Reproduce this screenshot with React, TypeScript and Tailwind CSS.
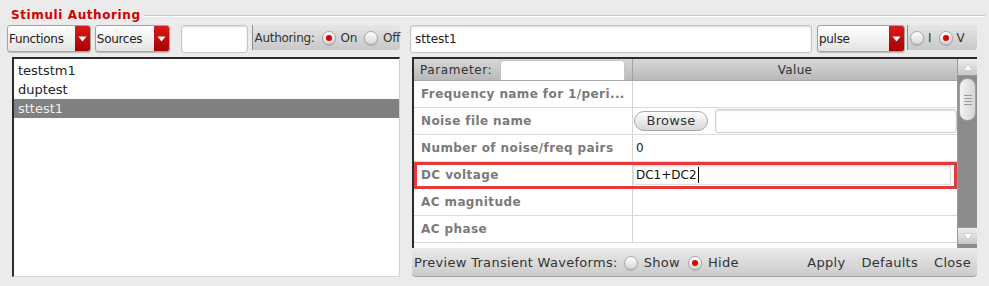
import React from "react";

const font = { fontFamily: '"DejaVu Sans", "Liberation Sans", sans-serif' };

function Arrow({ color = "white" }: { color?: string }) {
    return (
        <svg width="9" height="6" viewBox="0 0 9 6">
            <path d="M0.5 0.5 L8.5 0.5 L4.5 5.5 Z" fill={color} />
        </svg>
    );
}

function Dropdown({ label, width }: { label: string; width: string }) {
    return (
        <div className={`${width} h-[27px] flex rounded-[3px] border border-[#a4a4a4] bg-gradient-to-b from-white to-[#e4e4e4] overflow-hidden shadow-[0_1px_1px_rgba(0,0,0,0.2)]`}>
            <div className="flex-1 flex items-center pl-[1px] text-[12px] text-[#222] tracking-[-0.3px]">{label}</div>
            <div className="w-[15px] flex items-center justify-center bg-gradient-to-b from-[#d81a1a] to-[#a80000]">
                <Arrow />
            </div>
        </div>
    );
}

function Radio({ checked }: { checked?: boolean }) {
    return (
        <div className="w-[14px] h-[14px] rounded-full border border-[#a8a8a8] bg-gradient-to-b from-white to-[#d8d8d8] flex items-center justify-center shadow-[0_1px_1px_rgba(0,0,0,0.15)]">
            {checked && <div className="w-[6px] h-[6px] rounded-full bg-[#e00000]" />}
        </div>
    );
}

function ParamRow({ name, children, highlight }: { name: string; children?: React.ReactNode; highlight?: boolean }) {
    return (
        <div className={`flex h-[27px] bg-white border-b border-[#dadada] ${highlight ? "outline-[3px] outline outline-[#e63a3a] -outline-offset-[3px]" : ""}`}>
            <div className="w-[219px] flex items-center pl-[7px] text-[12px] font-bold text-[#7a7a7a] tracking-[0.4px] border-r border-[#d4d4d4] whitespace-nowrap">
                {name}
            </div>
            <div className="flex-1 flex items-center">{children}</div>
        </div>
    );
}

export default function App() {
    return (
        <div className="w-[989px] h-[286px] bg-[#ebebeb] overflow-hidden" style={font}>
            {/* Title */}
            <div className="h-[25px] flex items-center pl-[11px] pr-[4px] pt-[5px]">
                <span className="text-[12px] font-bold text-[#d40000] tracking-[0.6px]">Stimuli Authoring</span>
                <div className="flex-1 ml-[3px] border-t border-[#c6c6c6] border-b-white border-b h-0 mt-[1px]" />
            </div>

            <div className="flex">
                {/* Left column */}
                <div className="w-[400px] pl-[7px]">
                    <div className="h-[32px] flex items-start">
                        <Dropdown label="Functions" width="w-[84px]" />
                        <div className="w-[4px]" />
                        <Dropdown label="Sources" width="w-[75px]" />
                        <div className="ml-[11px] w-[67px] h-[28px] bg-white rounded-[3px] border border-[#c8c8c8] shadow-[inset_0_1px_2px_rgba(0,0,0,0.15)]" />
                        <div className="ml-[4px] flex-1 h-[25px] flex items-center border-l border-[#909090] rounded-r-[3px] bg-gradient-to-b from-[#e6e6e6] to-[#c8c8c8] text-[12px] text-[#333] tracking-[-0.3px] pl-[2px]">
                            <span>Authoring:</span>
                            <div className="ml-[7px]"><Radio checked /></div>
                            <span className="ml-[5px]">On</span>
                            <div className="ml-[7px]"><Radio /></div>
                            <span className="ml-[5px]">Off</span>
                        </div>
                    </div>
                    <div className="ml-[5px] h-[220px] bg-white border-t-2 border-l-2 border-[#2a2a2a] border-r border-b border-r-[#d0d0d0] border-b-[#d8d8d8] pt-[2px] text-[13px] text-[#222]">
                        <div className="h-[19px] flex items-center pl-[4px]">teststm1</div>
                        <div className="h-[19px] flex items-center pl-[4px]">duptest</div>
                        <div className="h-[19px] flex items-center pl-[4px] bg-[#808080] text-[#eeeeee]">sttest1</div>
                    </div>
                </div>

                {/* Right column */}
                <div className="ml-[10px] w-[567px]">
                    <div className="h-[32px] flex items-start">
                        <div className="w-[402px] h-[28px] bg-white rounded-[3px] border border-[#c4c4c4] shadow-[inset_0_1px_2px_rgba(0,0,0,0.15)] flex items-center pl-[4px] text-[12px] text-[#222]">
                            sttest1
                        </div>
                        <div className="ml-[5px]"><Dropdown label="pulse" width="w-[88px]" /></div>
                        <div className="ml-[2px] flex-1 h-[25px] flex items-center border-l border-[#909090] rounded-r-[3px] bg-gradient-to-b from-[#e6e6e6] to-[#c8c8c8] text-[12px] text-[#333] pl-[2px]">
                            <Radio />
                            <span className="ml-[4px]">I</span>
                            <div className="ml-[7px]"><Radio checked /></div>
                            <span className="ml-[4px]">V</span>
                        </div>
                    </div>

                    {/* Table */}
                    <div className="ml-[2px] h-[191px] flex border-t-2 border-l-2 border-[#2a2a2a] bg-white">
                        <div className="flex-1 flex flex-col">
                            <div className="h-[22px] flex bg-gradient-to-b from-[#d8d8d8] to-[#b8b8b8] text-[12px] text-[#333] border-b border-[#a8a8a8]">
                                <div className="w-[219px] flex items-end pl-[6px] border-r border-[#a0a0a0]">
                                    <span className="self-center tracking-[0.6px]">Parameter:</span>
                                    <div className="ml-[8px] w-[125px] h-[20px] bg-white rounded-t-[4px] border border-b-0 border-[#c4c4c4]" />
                                </div>
                                <div className="flex-1 flex items-center justify-center tracking-[0.3px]">Value</div>
                            </div>
                            <ParamRow name="Frequency name for 1/peri..." />
                            <ParamRow name="Noise file name">
                                <div className="ml-[1px] w-[74px] h-[20px] rounded-full border border-[#a8a8a8] bg-gradient-to-b from-white to-[#d6d6d6] flex items-center justify-center text-[13px] text-[#333] tracking-[0.3px]">
                                    Browse
                                </div>
                                <div className="ml-[7px] flex-1 h-[24px] rounded-[3px] border border-[#cccccc] shadow-[inset_0_1px_2px_rgba(0,0,0,0.12)]" />
                            </ParamRow>
                            <ParamRow name="Number of noise/freq pairs">
                                <span className="pl-[3px] text-[12px] text-[#222]">0</span>
                            </ParamRow>
                            <ParamRow name="DC voltage" highlight>
                                <div className="flex-1 mr-[6px] h-[20px] flex items-center pl-[2px] text-[12px] text-[#111] border border-[#e0e0e0] shadow-[inset_0_1px_2px_rgba(0,0,0,0.12)]">
                                    DC1+DC2<span className="ml-[1px] w-px h-[16px] bg-black" />
                                </div>
                            </ParamRow>
                            <ParamRow name="AC magnitude" />
                            <ParamRow name="AC phase" />
                        </div>

                        {/* Scrollbar */}
                        <div className="w-[20px] flex flex-col bg-[#8c8c8c] border-l border-[#9a9a9a]">
                            <div className="h-[17px] flex items-center justify-center bg-gradient-to-b from-[#eeeeee] to-[#c8c8c8] border-b border-[#9a9a9a]">
                                <svg width="10" height="7" viewBox="0 0 10 7"><path d="M0.5 6.5 L9.5 6.5 L5 0.5 Z" fill="white" stroke="#b0b0b0" strokeWidth="0.5" /></svg>
                            </div>
                            <div className="mt-[2px] mx-[1px] h-[43px] rounded-full bg-gradient-to-r from-[#f4f4f4] to-[#d4d4d4] border border-[#a0a0a0] flex flex-col items-center justify-center gap-[2px]">
                                <div className="w-[8px] h-px bg-[#999]" />
                                <div className="w-[8px] h-px bg-[#999]" />
                                <div className="w-[8px] h-px bg-[#999]" />
                                <div className="w-[8px] h-px bg-[#999]" />
                            </div>
                            <div className="flex-1" />
                            <div className="h-[17px] mb-[4px] flex items-center justify-center bg-gradient-to-b from-[#eeeeee] to-[#c8c8c8] border-t border-[#9a9a9a]">
                                <svg width="10" height="7" viewBox="0 0 10 7"><path d="M0.5 0.5 L9.5 0.5 L5 6.5 Z" fill="white" stroke="#b0b0b0" strokeWidth="0.5" /></svg>
                            </div>
                        </div>
                    </div>

                    {/* Bottom bar */}
                    <div className="ml-[2px] mt-[2px] h-[27px] flex items-center rounded-b-[4px] bg-gradient-to-b from-[#e8e8e8] to-[#cbcbcb] border-b border-[#a0a0a0] pl-[2px] pr-[6px] text-[13px] text-[#333] tracking-[0.3px]">
                        <span>Preview Transient Waveforms:</span>
                        <div className="ml-[6px]"><Radio /></div>
                        <span className="ml-[6px]">Show</span>
                        <div className="ml-[8px]"><Radio checked /></div>
                        <span className="ml-[6px]">Hide</span>
                        <div className="flex-1" />
                        <span>Apply</span>
                        <span className="ml-[16px]">Defaults</span>
                        <span className="ml-[16px]">Close</span>
                    </div>
                </div>
            </div>
        </div>
    );
}
